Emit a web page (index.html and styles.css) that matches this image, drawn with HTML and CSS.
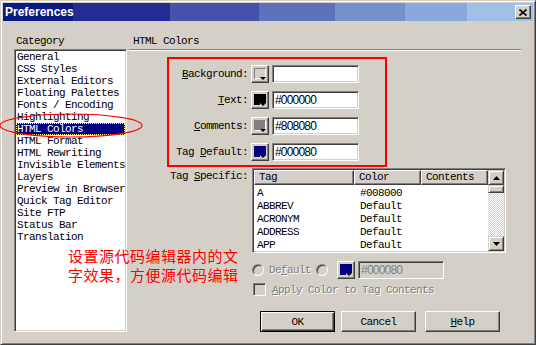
FILE: index.html
```html
<!DOCTYPE html>
<html lang="zh-CN">
<head>
    <meta charset="UTF-8">
    <title>Preferences</title>
    <link rel="stylesheet" href="styles.css">
</head>
<body>
    <div class="window">
        <div class="titlebar">
            <span class="title">Preferences</span>
            <button class="close">
                <svg width="8" height="7" viewBox="0 0 8 7"><path d="M0.5 0.5L7.5 6.5M7.5 0.5L0.5 6.5" stroke="#000" stroke-width="1.6"/></svg>
            </button>
        </div>

        <div class="content">
            <div class="left">
                <div class="caption">Category</div>
                <ul class="list">
                    <li>General</li>
                    <li>CSS Styles</li>
                    <li>External Editors</li>
                    <li>Floating Palettes</li>
                    <li>Fonts / Encoding</li>
                    <li>Highlighting</li>
                    <li class="selected">HTML Colors</li>
                    <li>HTML Format</li>
                    <li>HTML Rewriting</li>
                    <li>Invisible Elements</li>
                    <li>Layers</li>
                    <li>Preview in Browser</li>
                    <li>Quick Tag Editor</li>
                    <li>Site FTP</li>
                    <li>Status Bar</li>
                    <li>Translation</li>
                </ul>
            </div>

            <div class="right">
                <div class="caption heading">HTML Colors</div>
                <div class="rule"></div>

                <div class="color-group">
                    <div class="color-row">
                        <label class="row-label"><u>B</u>ackground:</label>
                        <span class="swatch-btn"><span class="swatch face"></span></span>
                        <span class="field"></span>
                    </div>
                    <div class="color-row">
                        <label class="row-label"><u>T</u>ext:</label>
                        <span class="swatch-btn"><span class="swatch black"></span></span>
                        <span class="field">#000000</span>
                    </div>
                    <div class="color-row">
                        <label class="row-label"><u>C</u>omments:</label>
                        <span class="swatch-btn"><span class="swatch gray"></span></span>
                        <span class="field">#808080</span>
                    </div>
                    <div class="color-row">
                        <label class="row-label">Tag <u>D</u>efault:</label>
                        <span class="swatch-btn"><span class="swatch navy"></span></span>
                        <span class="field">#000080</span>
                    </div>
                </div>

                <div class="tag-row">
                    <label class="row-label tag-label">Tag <u>S</u>pecific:</label>
                    <div class="table">
                        <div class="grid">
                            <div class="thead">
                                <div class="th">Tag</div>
                                <div class="th">Color</div>
                                <div class="th">Contents</div>
                            </div>
                            <div class="tbody">
                                <div class="tr"><span class="td">A</span><span class="td">#008000</span><span class="td"></span></div>
                                <div class="tr"><span class="td">ABBREV</span><span class="td">Default</span><span class="td"></span></div>
                                <div class="tr"><span class="td">ACRONYM</span><span class="td">Default</span><span class="td"></span></div>
                                <div class="tr"><span class="td">ADDRESS</span><span class="td">Default</span><span class="td"></span></div>
                                <div class="tr"><span class="td">APP</span><span class="td">Default</span><span class="td"></span></div>
                            </div>
                        </div>
                        <div class="vscroll">
                            <div class="sb-btn"><svg width="7" height="4" viewBox="0 0 7 4"><path d="M3.5 0L7 4H0z"/></svg></div>
                            <div class="sb-btn sb-thumb"></div>
                            <div class="sb-track"></div>
                            <div class="sb-btn"><svg width="7" height="4" viewBox="0 0 7 4"><path d="M0 0H7L3.5 4z"/></svg></div>
                        </div>
                    </div>
                </div>

                <div class="options">
                    <div class="radio-row">
                        <span class="radio"></span>
                        <span class="disabled radio-text">De<u>f</u>ault</span>
                        <span class="radio second"></span>
                        <span class="swatch-btn custom"><span class="swatch navy"></span></span>
                        <span class="field off">#000080</span>
                    </div>
                    <div class="check-row">
                        <span class="checkbox"></span>
                        <span class="disabled check-text"><u>A</u>pply Color to Tag Contents</span>
                    </div>
                </div>

                <div class="buttons">
                    <button class="btn default">OK</button>
                    <button class="btn">Cancel</button>
                    <button class="btn help"><u>H</u>elp</button>
                </div>
            </div>
        </div>

        <div class="note">设置源代码编辑器内的文<br>字效果，方便源代码编辑</div>
        <svg class="ring" width="150" height="32" viewBox="0 0 150 32">
            <ellipse cx="71" cy="15.5" rx="71" ry="11.5" fill="none" stroke="#f00" stroke-width="1.2"/>
        </svg>
    </div>
</body>
</html>
```

FILE: styles.css
```css
body {
    margin: 0;
    background-color: #d4d0c8;
}

.window {
    position: relative;
    width: 536px;
    height: 345px;
    box-sizing: border-box;
    border: 1px solid;
    border-color: #d4d0c8 #404040 #404040 #d4d0c8;
    box-shadow: inset 1px 1px #fff, inset -1px -1px #808080;
    padding: 2px;
    background-color: #d4d0c8;
    font-family: "Liberation Mono", monospace;
    font-size: 11px;
    letter-spacing: -0.6px;
    color: #000;
}

/* title bar */
.titlebar {
    display: flex;
    align-items: center;
    height: 18px;
    padding: 0 2px;
    background: linear-gradient(to right,
        #0a1a80 0 70px,
        #252b95 70px 167px,
        #4651a9 167px 256px,
        #5d72bd 256px 332px,
        #7690cc 332px 402px,
        #89a9dc 402px 464px,
        #a0c0e8 464px);
}

.title {
    flex: 1;
    font-family: "Liberation Sans", Arial, sans-serif;
    font-weight: bold;
    font-size: 12px;
    letter-spacing: 0;
    color: #fff;
}

.close {
    width: 16px;
    height: 14px;
    box-sizing: border-box;
    padding: 0;
    display: flex;
    align-items: center;
    justify-content: center;
    background-color: #d4d0c8;
    border: 1px solid;
    border-color: #fff #404040 #404040 #fff;
    box-shadow: inset -1px -1px #808080;
}

/* main area */
.content {
    display: flex;
    padding: 13px 0 0 11px;
}

.left {
    width: 113px;
    display: flex;
    flex-direction: column;
}

.caption {
    height: 15px;
    line-height: 15px;
    padding-left: 2px;
}

.list {
    margin: 0;
    padding: 1px;
    list-style: none;
    height: 283px;
    box-sizing: border-box;
    overflow: hidden;
    background-color: #fff;
    border: 1px solid;
    border-color: #808080 #fff #fff #808080;
    box-shadow: inset 1px 1px #404040, inset -1px -1px #d4d0c8;
}

.list li {
    height: 12px;
    line-height: 12px;
    padding-left: 1px;
    white-space: nowrap;
}

.list li.selected {
    background-color: #000080;
    color: #fff;
    outline: 1px dotted #ffff80;
    outline-offset: -1px;
}

.right {
    width: 392px;
    margin-left: 2px;
    display: flex;
    flex-direction: column;
}

.heading {
    padding-left: 4px;
}

.rule {
    border-top: 1px solid #808080;
    border-bottom: 1px solid #fff;
}

/* colour rows */
.color-group {
    margin: 6px 0 0 38px;
    width: 220px;
    height: 110px;
    box-sizing: border-box;
    border: 2px solid #f00;
    padding-top: 6px;
    display: flex;
    flex-direction: column;
    gap: 8px;
}

.color-row {
    display: flex;
    align-items: center;
    height: 18px;
}

.row-label {
    width: 79px;
    margin-right: 3px;
    text-align: right;
    white-space: nowrap;
}

.swatch-btn {
    position: relative;
    width: 18px;
    height: 18px;
    box-sizing: border-box;
    padding: 2px;
    margin-right: 3px;
    background-color: #d4d0c8;
    border: 1px solid;
    border-color: #fff #404040 #404040 #fff;
    box-shadow: inset -1px -1px #808080;
}

.swatch {
    display: block;
    width: 12px;
    height: 11px;
    box-sizing: border-box;
    border: 1px solid;
    border-color: #808080 #fff #fff #808080;
}

.swatch.face { background-color: #d4d0c8; }
.swatch.black { background-color: #000; border-color: #000; }
.swatch.gray { background-color: #808080; }
.swatch.navy { background-color: #000080; border-color: #000080; }

.swatch-btn::before {
    content: "";
    position: absolute;
    right: 1px;
    bottom: 1px;
    width: 7px;
    height: 4px;
    background-color: #d4d0c8;
}

.swatch-btn::after {
    content: "";
    position: absolute;
    right: 2px;
    bottom: 2px;
    border-left: 3px solid transparent;
    border-right: 3px solid transparent;
    border-top: 3px solid #000;
}

.field {
    width: 87px;
    height: 18px;
    box-sizing: border-box;
    padding: 0 2px;
    background-color: #fff;
    border: 1px solid;
    border-color: #808080 #fff #fff #808080;
    box-shadow: inset 1px 1px #404040, inset -1px -1px #d4d0c8;
    font-family: "Liberation Sans", Arial, sans-serif;
    font-size: 12px;
    letter-spacing: -0.8px;
    line-height: 16px;
}

.field.off {
    width: 86px;
    background-color: #d4d0c8;
    color: #808080;
}

/* tag table */
.tag-row {
    display: flex;
    margin-top: 1px;
}

.tag-label {
    width: 119px;
    margin-right: 4px;
    padding-top: 2px;
    line-height: 12px;
}

.table {
    display: flex;
    width: 254px;
    height: 85px;
    box-sizing: border-box;
    padding: 1px;
    background-color: #fff;
    border: 1px solid;
    border-color: #808080 #fff #fff #808080;
    box-shadow: inset 1px 1px #404040, inset -1px -1px #d4d0c8;
}

.grid {
    width: 234px;
    display: flex;
    flex-direction: column;
}

.thead {
    display: grid;
    grid-template-columns: 100px 67px 67px;
    height: 15px;
}

.th {
    box-sizing: border-box;
    padding-left: 4px;
    line-height: 13px;
    background-color: #d4d0c8;
    border: 1px solid;
    border-color: #fff #404040 #404040 #fff;
    box-shadow: inset -1px -1px #808080;
}

.tbody {
    height: 66px;
    padding-top: 2px;
    box-sizing: border-box;
    overflow: hidden;
}

.tr {
    display: grid;
    grid-template-columns: 100px 67px 67px;
    height: 13px;
    line-height: 13px;
}

.td {
    padding-left: 3px;
}

.td:nth-child(2) {
    padding-left: 6px;
}

.vscroll {
    width: 16px;
    display: flex;
    flex-direction: column;
}

.sb-btn {
    height: 15px;
    box-sizing: border-box;
    display: flex;
    align-items: center;
    justify-content: center;
    background-color: #d4d0c8;
    border: 1px solid;
    border-color: #d4d0c8 #404040 #404040 #d4d0c8;
    box-shadow: inset 1px 1px #fff, inset -1px -1px #808080;
}

.sb-thumb {
    height: 8px;
}

.sb-track {
    flex: 1;
    background: repeating-conic-gradient(#fff 0 25%, #d4d0c8 0 50%) 0 0 / 2px 2px;
}

/* lower options */
.options {
    margin: 8px 0 0 123px;
}

.radio-row {
    display: flex;
    align-items: center;
    height: 18px;
}

.radio {
    width: 12px;
    height: 12px;
    box-sizing: border-box;
    border-radius: 50%;
    background-color: #d4d0c8;
    border: 1px solid;
    border-color: #808080 #fff #fff #808080;
    box-shadow: inset 1px 1px #404040, inset -1px -1px #d4d0c8;
}

.radio-text {
    margin-left: 5px;
}

.radio.second {
    margin-left: 5px;
    margin-right: 9px;
}

.check-row {
    display: flex;
    align-items: center;
    height: 13px;
    margin-top: 4px;
}

.checkbox {
    width: 13px;
    height: 13px;
    margin-left: 1px;
    box-sizing: border-box;
    background-color: #d4d0c8;
    border: 1px solid;
    border-color: #808080 #fff #fff #808080;
    box-shadow: inset 1px 1px #404040, inset -1px -1px #d4d0c8;
}

.check-text {
    margin-left: 6px;
}

.disabled {
    color: #808080;
    text-shadow: 1px 1px 0 #fff;
}

/* dialog buttons */
.buttons {
    display: flex;
    margin: 15px 0 0 131px;
}

.btn {
    width: 75px;
    height: 21px;
    box-sizing: border-box;
    padding: 0;
    margin-right: 6px;
    font: inherit;
    letter-spacing: inherit;
    color: #000;
    background-color: #d4d0c8;
    border: 1px solid;
    border-color: #fff #404040 #404040 #fff;
    box-shadow: inset -1px -1px #808080;
}

.btn.default {
    border-color: #000;
    box-shadow: inset 1px 1px #fff, inset -1px -1px #404040, inset -2px -2px #808080;
}

.btn.help {
    margin-left: 3px;
}

/* red annotations */
.note {
    position: absolute;
    left: 67px;
    top: 245px;
    font-family: "Noto Sans CJK SC", sans-serif;
    font-size: 15px;
    letter-spacing: 0.5px;
    line-height: 19px;
    color: #f00;
    white-space: nowrap;
}

.ring {
    position: absolute;
    left: -1px;
    top: 109px;
}
```
